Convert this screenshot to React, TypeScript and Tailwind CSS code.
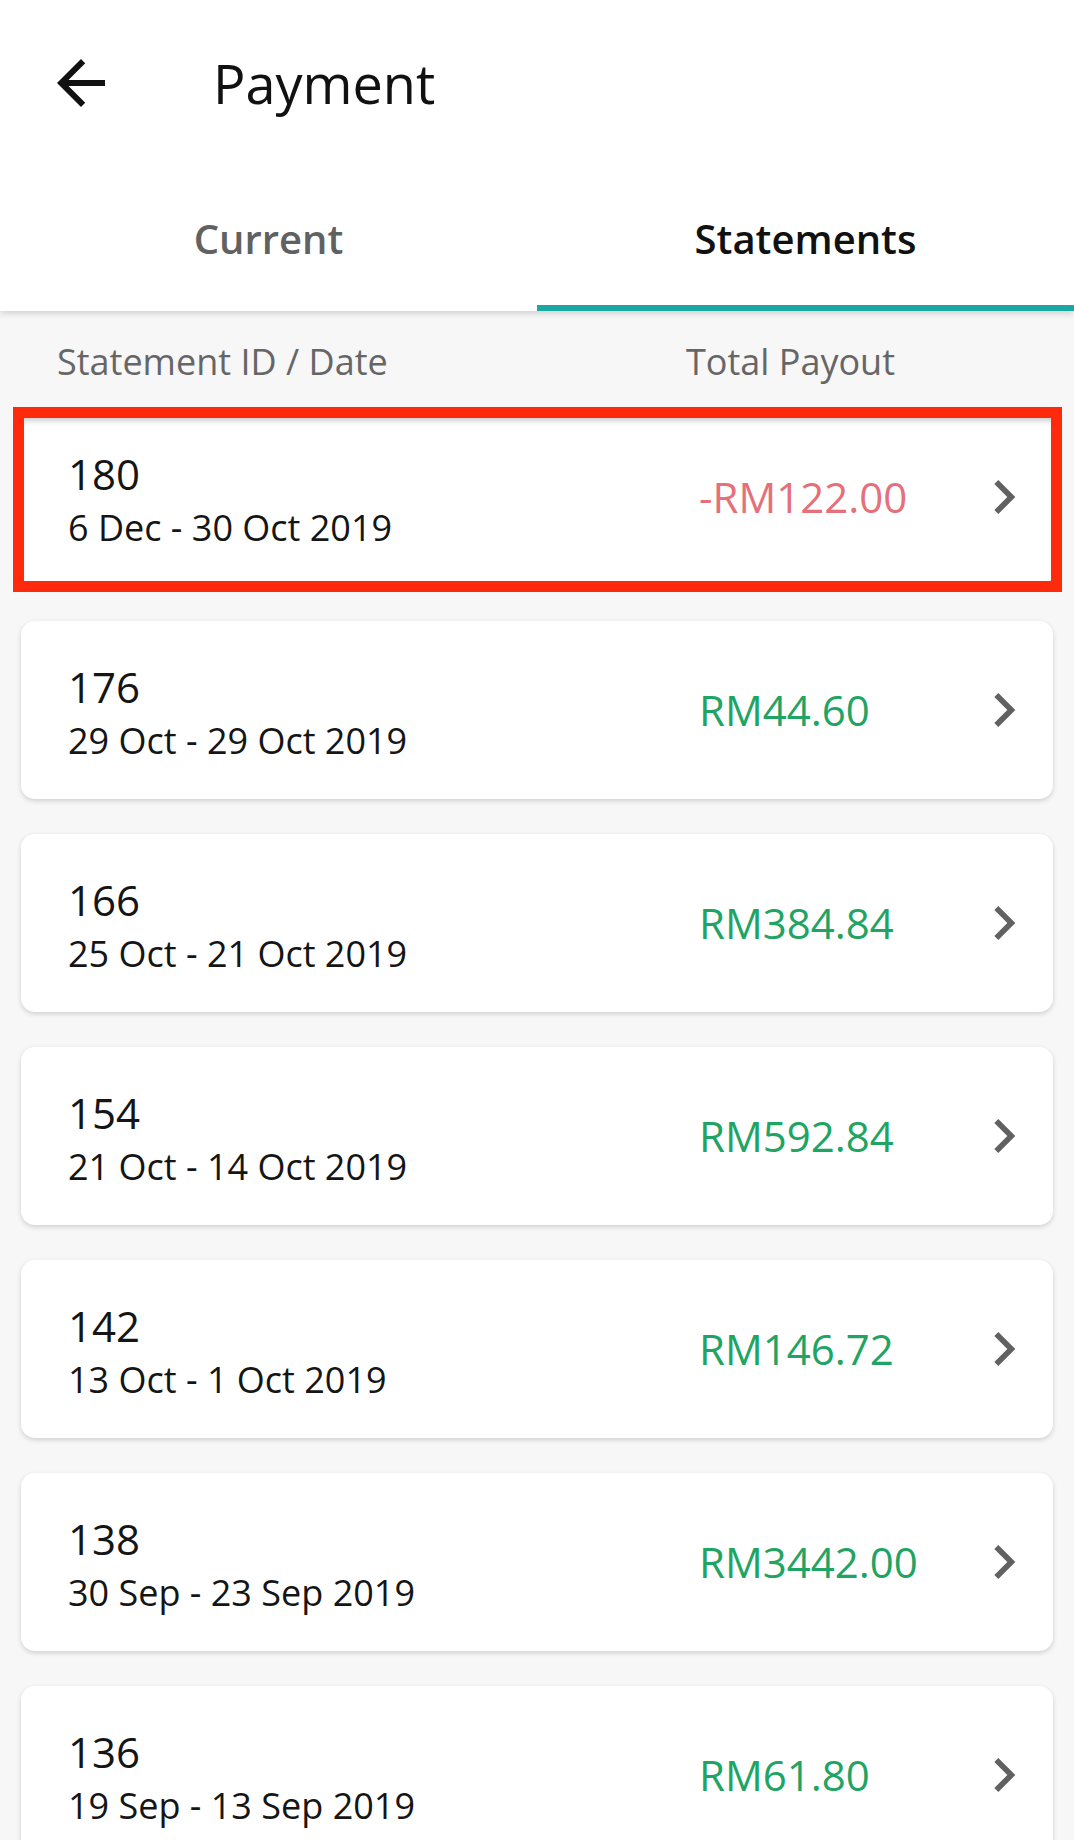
import React from 'react';

type Statement = {
  id: string;
  range: string;
  amount: string;
  negative?: boolean;
};

const STATEMENTS: Statement[] = [
  { id: '180', range: '6 Dec - 30 Oct 2019', amount: '-RM122.00', negative: true },
  { id: '176', range: '29 Oct - 29 Oct 2019', amount: 'RM44.60' },
  { id: '166', range: '25 Oct - 21 Oct 2019', amount: 'RM384.84' },
  { id: '154', range: '21 Oct - 14 Oct 2019', amount: 'RM592.84' },
  { id: '142', range: '13 Oct - 1 Oct 2019', amount: 'RM146.72' },
  { id: '138', range: '30 Sep - 23 Sep 2019', amount: 'RM3442.00' },
  { id: '136', range: '19 Sep - 13 Sep 2019', amount: 'RM61.80' },
];

function BackArrow() {
  return (
    <svg viewBox="0 0 24 24" className="w-[72px] h-[72px] shrink-0" fill="#111111">
      <path d="M20 11H7.83l5.59-5.59L12 4l-8 8 8 8 1.41-1.41L7.83 13H20v-2z" />
    </svg>
  );
}

function Chevron() {
  return (
    <svg viewBox="0 0 24 24" className="w-[68px] h-[68px] shrink-0" fill="#616161">
      <path d="M10 6L8.59 7.41 13.17 12l-4.58 4.59L10 18l6-6z" />
    </svg>
  );
}

function StatementCard({ item, highlighted }: { item: Statement; highlighted?: boolean }) {
  return (
    <div className="relative flex items-center h-[178px] shrink-0 bg-white rounded-[14px] shadow-[0_2px_5px_rgba(0,0,0,0.16)]">
      <div className="w-[676px] shrink-0 pl-[47px] pt-[7px] flex flex-col">
        <span className="text-[42px] leading-[54px] text-[#151515]">{item.id}</span>
        <span className="text-[36px] leading-[52px] mt-[1px] text-[#151515]">{item.range}</span>
      </div>
      <div
        className={`flex-1 pl-[2px] text-[42px] leading-none ${
          item.negative ? 'text-[#e5707a]' : 'text-[#1fa463]'
        }`}
      >
        {item.amount}
      </div>
      <div className="mr-[15px]">
        <Chevron />
      </div>
      {highlighted && (
        <div className="absolute -left-[8px] -right-[9px] -top-[1px] -bottom-[6px] border-[11px] border-[#ff2a0c] shadow-[inset_0_6px_6px_-4px_rgba(0,0,0,0.25)]" />
      )}
    </div>
  );
}

export default function App() {
  return (
    <div
      className="w-[1074px] h-[1840px] overflow-hidden bg-[#f7f7f7] flex flex-col"
      style={{ fontFamily: '"Open Sans", "Noto Sans", sans-serif' }}
    >
      <div className="bg-white shadow-[0_3px_6px_rgba(0,0,0,0.14)] relative z-10">
        <div className="h-[166px] flex items-center pl-[45px]">
          <BackArrow />
          <h1 className="ml-[96px] text-[54px] leading-none text-[#111111] font-normal">Payment</h1>
        </div>
        <div className="h-[145px] flex">
          <div className="flex-1 flex items-center justify-center">
            <span className="text-[40px] leading-none font-semibold text-[#616161]">Current</span>
          </div>
          <div className="relative flex-1 flex items-center justify-center">
            <span className="text-[40px] leading-none font-semibold text-[#111111]">Statements</span>
            <div className="absolute left-0 right-0 bottom-0 h-[6px] bg-[#1aa8a3]" />
          </div>
        </div>
      </div>

      <div className="flex pt-[27px] pb-[22px] text-[36px] leading-[48px] text-[#666666]">
        <span className="w-[686px] pl-[57px] shrink-0">Statement ID / Date</span>
        <span>Total Payout</span>
      </div>

      <div className="flex flex-col gap-[35px] px-[21px]">
        {STATEMENTS.map((s, i) => (
          <StatementCard key={s.id} item={s} highlighted={i === 0} />
        ))}
      </div>
    </div>
  );
}
